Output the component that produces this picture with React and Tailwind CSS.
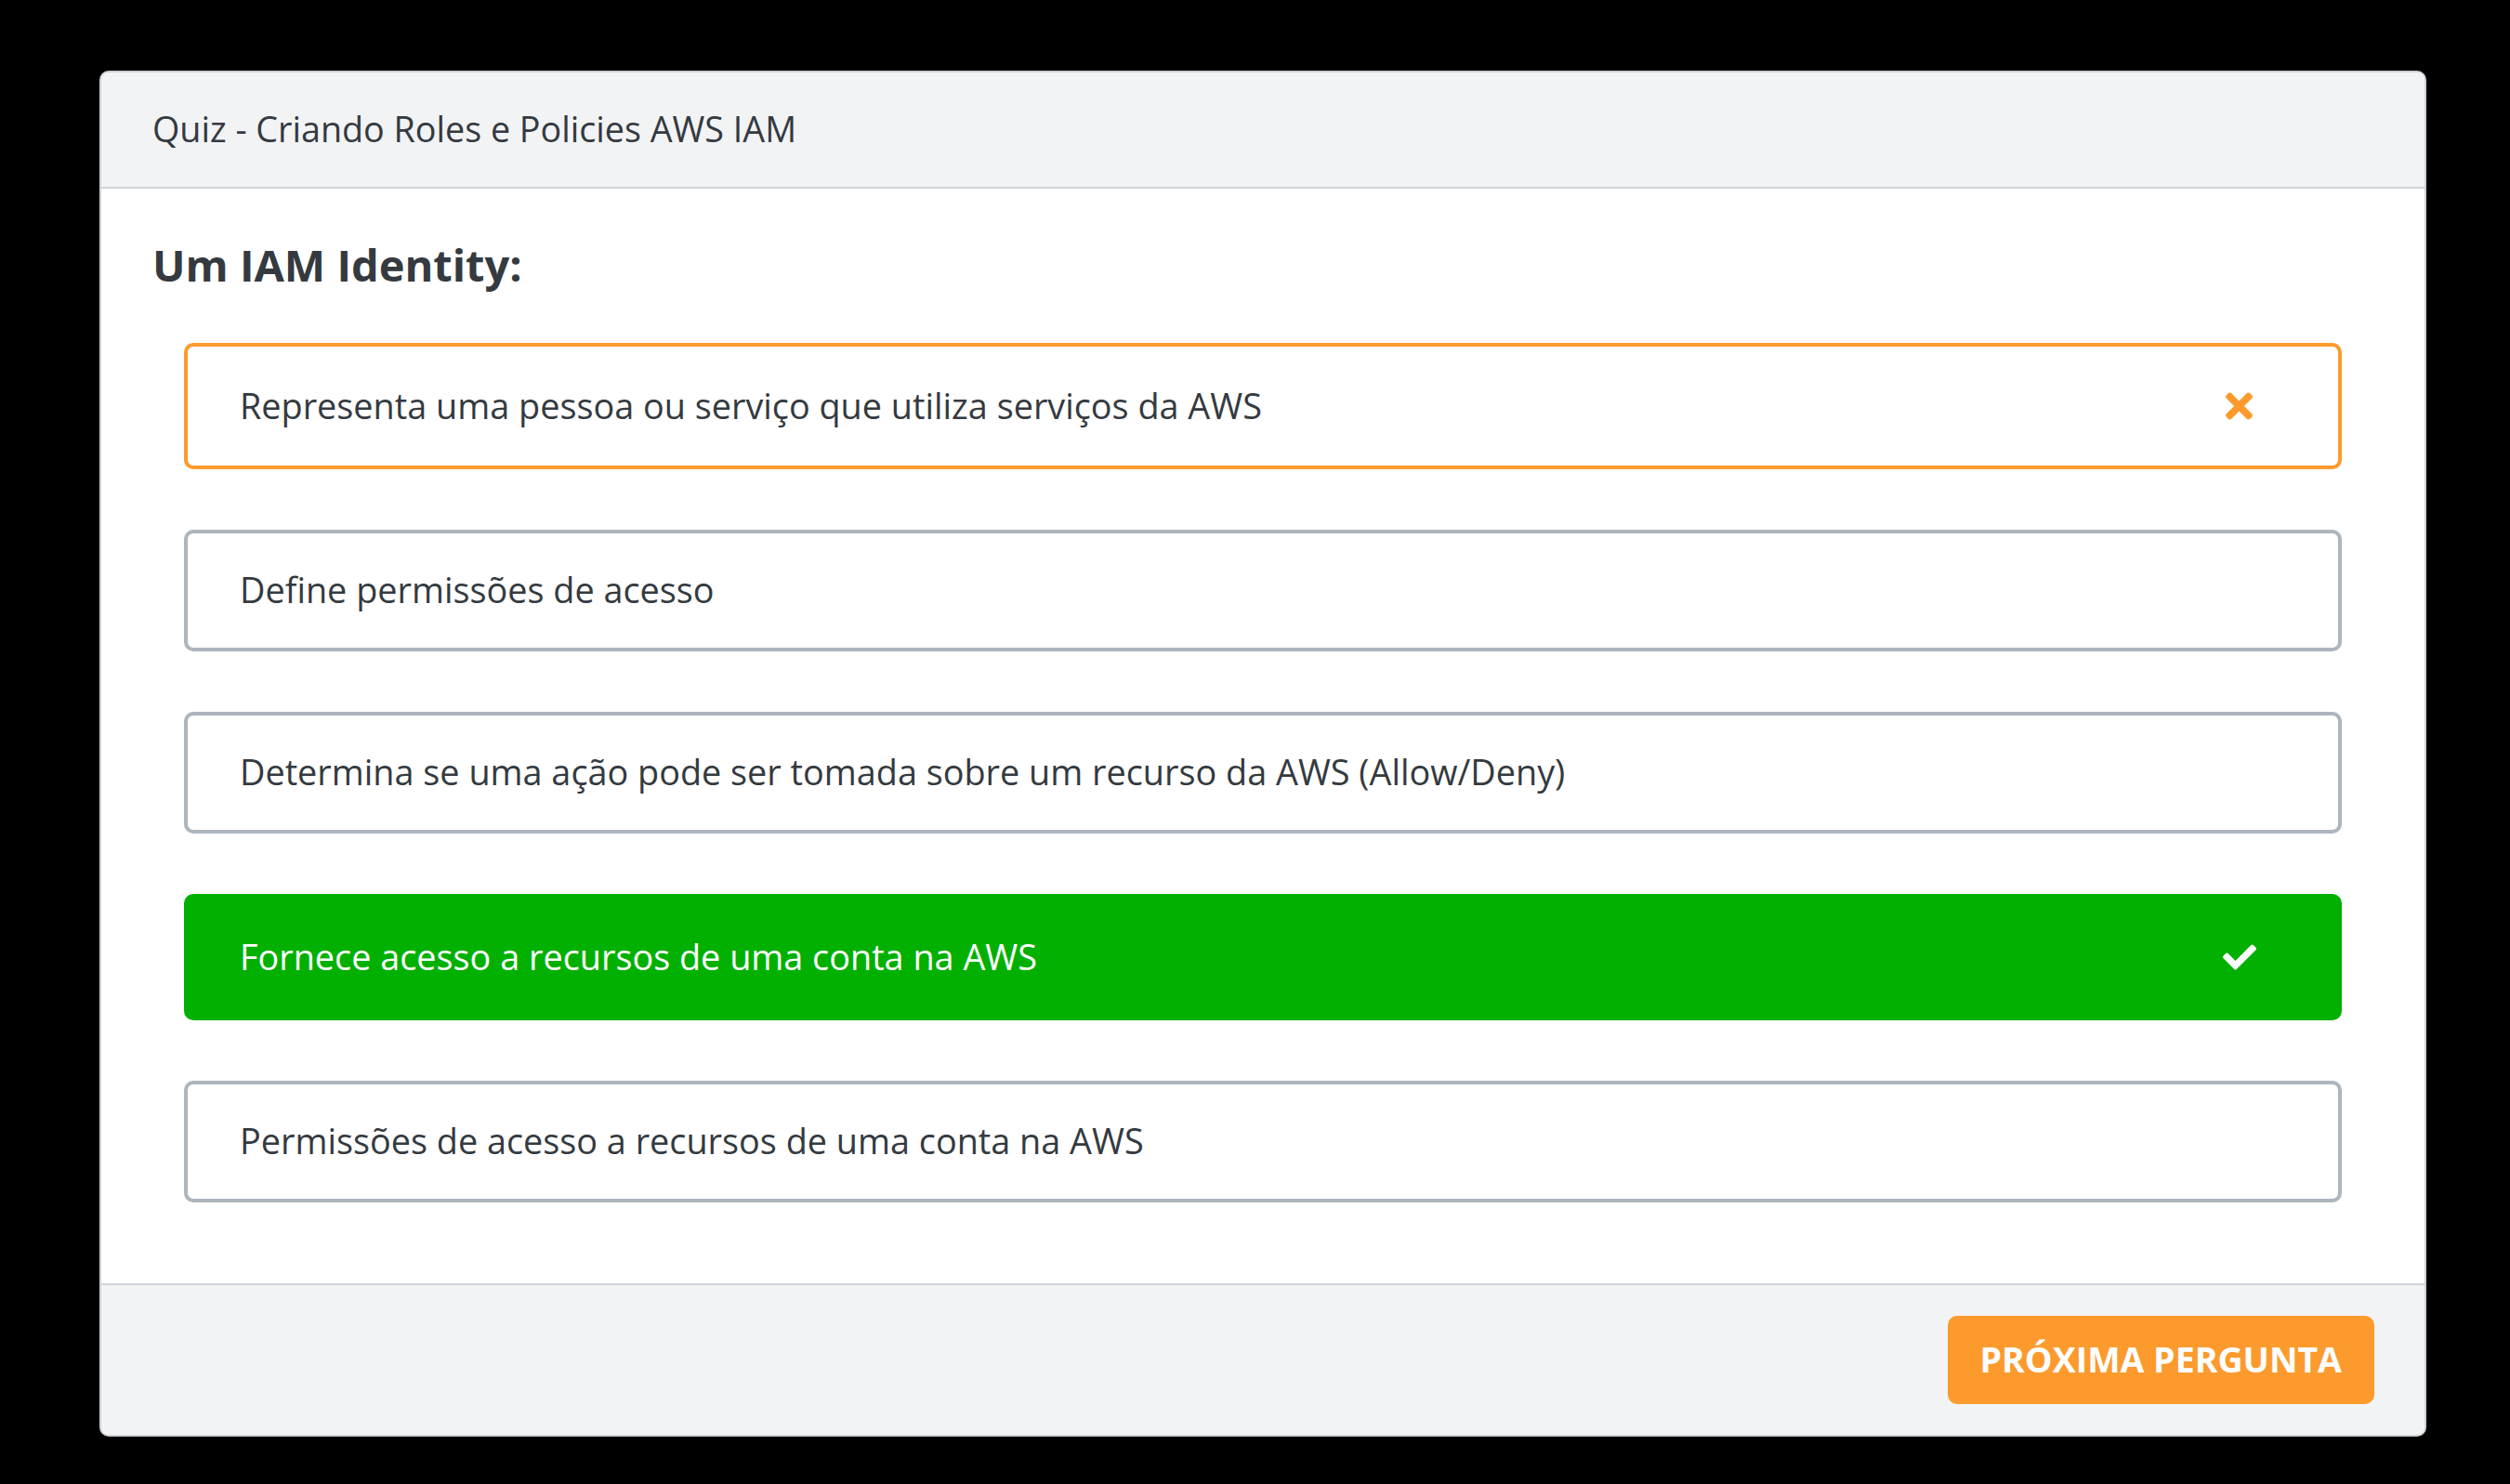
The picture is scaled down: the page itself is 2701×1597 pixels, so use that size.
import React from 'react';
import { FaTimes, FaCheck } from 'react-icons/fa';

const options = [
  { id: 1, text: 'Representa uma pessoa ou serviço que utiliza serviços da AWS', status: 'wrong' },
  { id: 2, text: 'Define permissões de acesso', status: 'idle' },
  { id: 3, text: 'Determina se uma ação pode ser tomada sobre um recurso da AWS (Allow/Deny)', status: 'idle' },
  { id: 4, text: 'Fornece acesso a recursos de uma conta na AWS', status: 'correct' },
  { id: 5, text: 'Permissões de acesso a recursos de uma conta na AWS', status: 'idle' },
];

const Option = ({ option }) => {
  if (option.status === 'wrong') {
    return (
      <div className="flex items-center justify-between h-[136px] pl-[56px] pr-[92px] bg-white border-4 border-[#fc9a2e] rounded-[10px] text-[#343a40]">
        <span>{option.text}</span>
        <FaTimes className="text-[#fc9a2e] w-[29px] h-[42px]" />
      </div>
    );
  }

  if (option.status === 'correct') {
    return (
      <div className="flex items-center justify-between h-[136px] pl-[56px] pr-[88px] bg-[#02b002] border-4 border-[#02b002] rounded-[10px] text-white">
        <span>{option.text}</span>
        <FaCheck className="text-white w-[36px] h-[36px]" />
      </div>
    );
  }

  return (
    <div className="flex items-center h-[131px] pl-[56px] pr-[56px] bg-white border-4 border-[#adb5bd] rounded-[10px] text-[#343a40]">
      <span>{option.text}</span>
    </div>
  );
};

const App = () => {
  return (
    <div
      className="min-h-screen bg-black pl-[107px] pr-[90px] pt-[76px] pb-[51px]"
      style={{ fontFamily: '"Open Sans", "Noto Sans", sans-serif' }}
    >
      <div className="bg-white border-2 border-[#cdd1d6] rounded-[10px] overflow-hidden">
        {/* header */}
        <div className="h-[125px] flex items-center px-[55px] bg-[#f2f3f5] border-b-2 border-[#cfd3d8]">
          <h1 className="text-[37.7px] text-[#343a40]">Quiz - Criando Roles e Policies AWS IAM</h1>
        </div>

        {/* question */}
        <div className="px-[55px] pt-[52px] pb-[87px]">
          <h2 className="text-[47px] leading-[60px] font-bold text-[#343a40]">Um IAM Identity:</h2>
          <div className="mt-[54px] px-[34px] flex flex-col gap-[65px] text-[37.8px]">
            {options.map((option) => (
              <Option key={option.id} option={option} />
            ))}
          </div>
        </div>

        {/* footer */}
        <div className="flex justify-end px-[54px] pt-[33px] pb-[33px] bg-[#f2f3f5] border-t-2 border-[#cfd3d8]">
          <button className="h-[95px] px-[35px] bg-[#fc9a2e] rounded-[10px] text-white text-[37.5px] font-bold uppercase">
            Próxima pergunta
          </button>
        </div>
      </div>
    </div>
  );
};

export default App;
